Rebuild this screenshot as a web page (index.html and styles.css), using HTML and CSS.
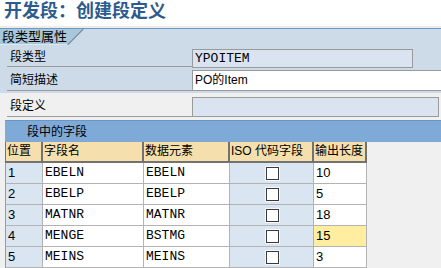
FILE: index.html
```html
<!DOCTYPE html>
<html lang="zh">
<head>
    <meta charset="UTF-8">
    <title>开发段：创建段定义</title>
    <link rel="stylesheet" href="styles.css">
</head>
<body>
    <div class="title">开发段：创建段定义</div>
    <div class="strip"></div>

    <!-- 段类型属性 -->
    <div class="attrs">
        <div class="tab-wrap">
            <div class="tab">段类型属性</div>
        </div>
        <div class="field-row row-first">
            <span class="label">段类型</span>
            <span class="input mono">YPOITEM</span>
        </div>
        <div class="field-row row-second">
            <span class="label">简短描述</span>
            <span class="input input-white">PO的Item</span>
        </div>
    </div>

    <div class="def-row">
        <span class="label">段定义</span>
        <span class="input input-wide"></span>
    </div>

    <!-- 段中的字段 -->
    <div class="fields">
        <div class="fields-title">段中的字段</div>
        <div class="grid">
            <div class="th">位置</div>
            <div class="th">字段名</div>
            <div class="th">数据元素</div>
            <div class="th">ISO 代码字段</div>
            <div class="th">输出长度</div>

            <div class="td pos">1</div>
            <div class="td mono">EBELN</div>
            <div class="td mono">EBELN</div>
            <div class="td iso"><span class="check"></span></div>
            <div class="td num">10</div>

            <div class="td pos">2</div>
            <div class="td mono">EBELP</div>
            <div class="td mono">EBELP</div>
            <div class="td iso"><span class="check"></span></div>
            <div class="td num">5</div>

            <div class="td pos">3</div>
            <div class="td mono">MATNR</div>
            <div class="td mono">MATNR</div>
            <div class="td iso"><span class="check"></span></div>
            <div class="td num">18</div>

            <div class="td pos">4</div>
            <div class="td mono">MENGE</div>
            <div class="td mono">BSTMG</div>
            <div class="td iso"><span class="check"></span></div>
            <div class="td num active">15</div>

            <div class="td pos">5</div>
            <div class="td mono">MEINS</div>
            <div class="td mono">MEINS</div>
            <div class="td iso"><span class="check"></span></div>
            <div class="td num">3</div>
        </div>
    </div>
</body>
</html>
```

FILE: styles.css
```css
body {
    margin: 0;
    width: 441px;
    height: 268px;
    overflow: hidden;
    background: white;
    font-family: "Liberation Sans", "Noto Sans CJK SC", sans-serif;
    font-size: 12px;
    color: #000;
}
.title {
    height: 26px;
    padding-left: 4px;
    font-size: 18px;
    font-weight: bold;
    line-height: 22px;
    color: #2b5c8d;
}
.strip {
    height: 2px;
    background: #ececec;
}
.attrs {
    height: 64px;
    background: #cddbe9;
    border-top: 1px solid #6b98c4;
}
.tab-wrap {
    position: relative;
    width: 84px;
    height: 16px;
}
.tab-wrap::after {
    content: "";
    position: absolute;
    left: 75px;
    top: -3px;
    width: 1px;
    height: 22px;
    background: #6f8593;
    transform: rotate(45deg);
}
.tab {
    width: 84px;
    height: 16px;
    padding-left: 2px;
    box-sizing: border-box;
    line-height: 16px;
    font-size: 13px;
    background: #a8c7d8;
    border-bottom: 1px solid #dce8ef;
    clip-path: polygon(0 0, 84px 0, 68px 100%, 0 100%);
}
.field-row {
    display: flex;
}
.row-first {
    height: 23px;
    align-items: flex-end;
}
.row-second {
    height: 25px;
    padding-top: 2px;
    box-sizing: border-box;
}
.label {
    width: 182px;
    margin-left: 7px;
    padding-left: 3px;
    border-bottom: 1px solid #9c9c9c;
    line-height: 18px;
    font-size: 12px;
}
.row-first .label {
    margin-bottom: 1px;
}
.row-second .label {
    height: 20px;
    line-height: 20px;
}
.input {
    display: block;
    box-sizing: border-box;
    width: 221px;
    height: 19px;
    padding-left: 2px;
    line-height: 17px;
    border: 1px solid #9a9a9a;
    background: #dae4f1;
}
.input-white {
    width: 249px;
    height: 21px;
    line-height: 19px;
    border-right: none;
    background: white;
    font-size: 12px;
}
.def-row {
    display: flex;
    height: 27px;
    background: #f0f0f0;
}
.def-row .label {
    height: 23px;
    line-height: 26px;
}
.input-wide {
    width: 247px;
    height: 20px;
    margin-top: 4px;
}
.mono {
    font-family: "Liberation Mono", "DejaVu Sans Mono", monospace;
    font-size: 13px;
}
.fields {
    height: 148px;
    padding-left: 5px;
    background: #f0f0f0;
}
.fields-title {
    height: 22px;
    padding-left: 22px;
    box-sizing: border-box;
    line-height: 22px;
    background: #7fa9d6;
    border-top: 1px solid #6b96c3;
}
.grid {
    display: grid;
    grid-template-columns: 38px 101px 86px 84px 53px;
    width: 362px;
}
.th {
    height: 21px;
    box-sizing: border-box;
    padding-left: 1px;
    line-height: 19px;
    background: #f4dfad;
    border-right: 2px solid #727272;
    border-bottom: 2px solid #727272;
    white-space: nowrap;
    overflow: hidden;
}
.th:first-child {
    border-left: 1px solid #727272;
}
.td {
    height: 21px;
    box-sizing: border-box;
    padding-left: 2px;
    line-height: 20px;
    background: white;
    border-right: 1px solid #b3b3b3;
    border-bottom: 1px solid #b3b3b3;
}
.pos {
    border-left: 1px solid #9a9a9a;
    background: #dae5f2;
    font-size: 13px;
}
.iso {
    display: flex;
    align-items: center;
    justify-content: center;
    background: #dae5f2;
}
.check {
    width: 11px;
    height: 11px;
    background: white;
    border: 1px solid #3a3a3a;
    box-shadow: 0 0 0 1px #f6f8fb;
}
.num {
    font-size: 13px;
}
.active {
    background: #ffee9f;
}
```
